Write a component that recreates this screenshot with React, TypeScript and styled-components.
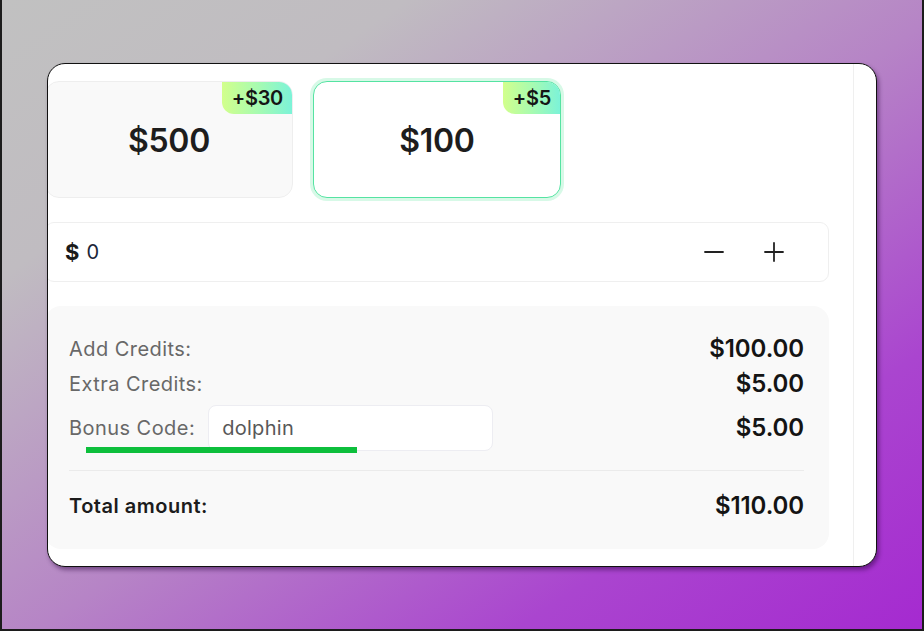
import React from "react";
import styled, { createGlobalStyle } from "styled-components";

const Global = createGlobalStyle`
  html, body { margin: 0; padding: 0; }
  body { font-family: Inter, "Noto Sans", sans-serif; }
  * { box-sizing: border-box; }
`;

const Page = styled.div`
  width: 924px;
  height: 631px;
  border-left: 2px solid #1c1c1c;
  border-right: 2px solid #1c1c1c;
  border-bottom: 2px solid #1c1c1c;
  padding: 63px 0 0 45px;
  background: linear-gradient(
    to bottom right,
    #c1c1c1 0%,
    #c0bcc1 22%,
    #b684c6 52%,
    #aa45cf 78%,
    #a52ad0 100%
  );
  overflow: hidden;
`;

const Window = styled.div`
  width: 830px;
  height: 504px;
  border: 1.5px solid #111;
  border-radius: 18px;
  background: #fff;
  overflow: hidden;
  display: flex;
  box-shadow: 2px 3px 4px rgba(40, 0, 60, 0.45);
`;

const Main = styled.div`
  flex: 1;
  padding: 17px 24px 0 0;
  overflow: hidden;
`;

const Gutter = styled.div`
  width: 23px;
  border-left: 1px solid #efefef;
`;

const Content = styled.div`
  margin-left: -3px;
  display: flex;
  flex-direction: column;
  gap: 24px;
`;

const Cards = styled.div`
  display: grid;
  grid-template-columns: repeat(3, 1fr);
  gap: 20px;
`;

const Card = styled.div<{ $selected?: boolean }>`
  position: relative;
  height: 117px;
  border-radius: 14px;
  display: flex;
  align-items: center;
  justify-content: center;
  background: ${(p) => (p.$selected ? "#fff" : "#f9f9f9")};
  border: ${(p) => (p.$selected ? "1.5px solid #55e3a2" : "1px solid #eeeeee")};
  box-shadow: ${(p) => (p.$selected ? "0 0 0 3px rgba(110, 235, 170, 0.28)" : "none")};
  font-size: 32px;
  font-weight: 600;
  color: #1d1d1d;
  letter-spacing: -0.3px;
  padding-top: 2px;
`;

const Badge = styled.div`
  position: absolute;
  top: 0;
  right: 0;
  height: 32px;
  padding: 0 9px 0 10px;
  display: flex;
  align-items: center;
  border-radius: 0 13px 0 12px;
  background: linear-gradient(90deg, #d2ff8c 0%, #a8fbb0 50%, #7cf3d8 100%);
  font-size: 20px;
  font-weight: 600;
  color: #151515;
`;

const AmountRow = styled.div`
  height: 60px;
  border: 1px solid #efefef;
  border-radius: 9px;
  display: flex;
  align-items: center;
  padding: 0 34px 0 19px;
`;

const Currency = styled.span`
  font-size: 22px;
  font-weight: 700;
  color: #1a1a1a;
  margin-right: 7px;
`;

const AmountValue = styled.span`
  flex: 1;
  font-size: 20px;
  font-weight: 400;
  color: #1b2638;
`;

const StepButton = styled.button`
  width: 40px;
  height: 40px;
  margin-left: 20px;
  border: none;
  background: transparent;
  display: flex;
  align-items: center;
  justify-content: center;
  padding: 0;
  color: #222;
`;

const Summary = styled.div`
  background: #f9f9f9;
  border-radius: 16px;
  padding: 29px 25px 29px 24px;
  display: flex;
  flex-direction: column;
`;

const Rows = styled.div`
  display: flex;
  flex-direction: column;
  gap: 7px;
`;

const Row = styled.div`
  position: relative;
  display: flex;
  align-items: center;
  min-height: 28px;
`;

const Label = styled.span<{ $strong?: boolean }>`
  font-size: 20px;
  line-height: 28px;
  letter-spacing: ${(p) => (p.$strong ? "0.5px" : "0.45px")};
  font-weight: ${(p) => (p.$strong ? 600 : 400)};
  color: ${(p) => (p.$strong ? "#1c1c1c" : "#686868")};
`;

const Value = styled.span`
  margin-left: auto;
  font-size: 24px;
  line-height: 28px;
  font-weight: 600;
  color: #141414;
  letter-spacing: -0.1px;
`;

const CodeInput = styled.div`
  width: 285px;
  height: 46px;
  margin-left: 13px;
  background: #fff;
  border: 1px solid #ededf2;
  border-radius: 8px;
  display: flex;
  align-items: center;
  padding: 0 13px;
  font-size: 20px;
  letter-spacing: 0.3px;
  color: #585858;
`;

const Highlight = styled.div`
  position: absolute;
  left: 17px;
  top: 42px;
  width: 271px;
  height: 6px;
  background: #0dbf3c;
`;

const Divider = styled.div`
  height: 1px;
  background: #ebebeb;
  margin: 19px 0 21px;
`;

const Line = ({ vertical }: { vertical?: boolean }) => (
  <svg width="20" height="20" viewBox="0 0 20 20" fill="none" stroke="currentColor" strokeWidth="1.8" strokeLinecap="round">
    <line x1="1" y1="10" x2="19" y2="10" />
    {vertical && <line x1="10" y1="1" x2="10" y2="19" />}
  </svg>
);

export default function App() {
  return (
    <>
      <Global />
      <Page>
        <Window>
          <Main>
            <Content>
              <Cards>
                <Card>
                  $500
                  <Badge>+$30</Badge>
                </Card>
                <Card $selected>
                  $100
                  <Badge>+$5</Badge>
                </Card>
              </Cards>
              <AmountRow>
                <Currency>$</Currency>
                <AmountValue>0</AmountValue>
                <StepButton aria-label="decrease">
                  <Line />
                </StepButton>
                <StepButton aria-label="increase">
                  <Line vertical />
                </StepButton>
              </AmountRow>
              <Summary>
                <Rows>
                  <Row>
                    <Label>Add Credits:</Label>
                    <Value>$100.00</Value>
                  </Row>
                  <Row>
                    <Label>Extra Credits:</Label>
                    <Value>$5.00</Value>
                  </Row>
                  <Row>
                    <Label>Bonus Code:</Label>
                    <CodeInput>dolphin</CodeInput>
                    <Value>$5.00</Value>
                    <Highlight />
                  </Row>
                </Rows>
                <Divider />
                <Row>
                  <Label $strong>Total amount:</Label>
                  <Value>$110.00</Value>
                </Row>
              </Summary>
            </Content>
          </Main>
          <Gutter />
        </Window>
      </Page>
    </>
  );
}
